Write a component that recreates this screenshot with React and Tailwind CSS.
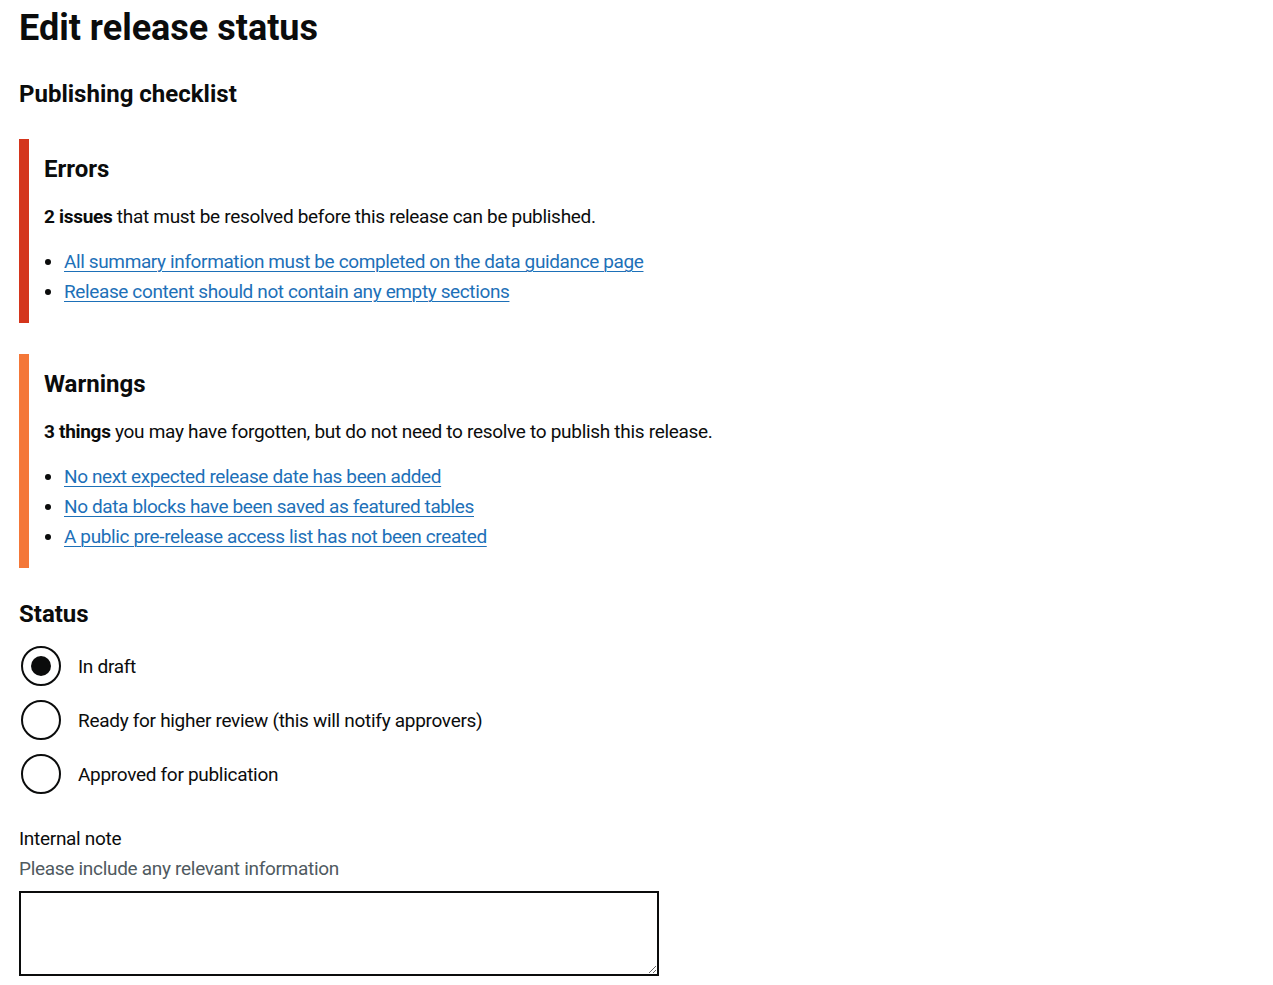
import { useState } from 'react';

// ── Data ───────────────────────────────────────────────────────────────────────

const ERRORS = [
  'All summary information must be completed on the data guidance page',
  'Release content should not contain any empty sections',
];

const WARNINGS = [
  'No next expected release date has been added',
  'No data blocks have been saved as featured tables',
  'A public pre-release access list has not been created',
];

const STATUSES = [
  { value: 'Draft', label: 'In draft' },
  { value: 'HigherLevelReview', label: 'Ready for higher review (this will notify approvers)' },
  { value: 'Approved', label: 'Approved for publication' },
];

// ── Sub-components ─────────────────────────────────────────────────────────────

function ChecklistPanel({ title, colour, summary, items, className = '' }) {
  return (
    <div className={`border-l-[10px] ${colour} pl-[15px] pt-[15px] pb-[16px] ${className}`}>
      <h3 className="text-[24px] leading-[30px] font-bold">{title}</h3>
      <p className="mt-[20px] text-[19px] leading-[25px] tracking-[-0.3px]">{summary}</p>
      <ul className="mt-[18px] list-disc pl-[20px]">
        {items.map(item => (
          <li key={item} className="text-[19px] leading-[30px] tracking-[-0.38px]">
            <a href="#" className="text-[#1d70b8] underline decoration-1 underline-offset-[3px]">{item}</a>
          </li>
        ))}
      </ul>
    </div>
  );
}

function Radio({ label, checked, onChange }) {
  return (
    <label className="flex items-center h-[44px] cursor-pointer">
      <span className="ml-[2px] w-[40px] h-[40px] rounded-full border-2 border-[#0b0c0c] flex items-center justify-center shrink-0">
        {checked && <span className="w-[20px] h-[20px] rounded-full bg-[#0b0c0c]" />}
      </span>
      <input type="radio" className="sr-only" checked={checked} onChange={onChange} />
      <span className="ml-[17px] text-[19px] leading-[25px] tracking-[-0.3px]">{label}</span>
    </label>
  );
}

// ── Main component ─────────────────────────────────────────────────────────────

export default function App() {
  const [status, setStatus] = useState('Draft');
  const [note, setNote] = useState('');

  return (
    <div className="min-h-screen bg-white px-[19px] pt-[8px] text-[#0b0c0c] font-['Roboto',sans-serif]">
      <h1 className="text-[36px] leading-[40px] font-bold">Edit release status</h1>

      <h2 className="mt-[31px] text-[24px] leading-[30px] font-bold">Publishing checklist</h2>

      <ChecklistPanel
        className="mt-[30px]"
        title="Errors"
        colour="border-[#d4351c]"
        summary={<><strong>2 issues</strong> that must be resolved before this release can be published.</>}
        items={ERRORS}
      />

      <ChecklistPanel
        className="mt-[31px]"
        title="Warnings"
        colour="border-[#f47738]"
        summary={<><strong>3 things</strong> you may have forgotten, but do not need to resolve to publish this release.</>}
        items={WARNINGS}
      />

      <h2 className="mt-[31px] text-[24px] leading-[30px] font-bold">Status</h2>

      <div className="mt-[15px] flex flex-col gap-[10px]">
        {STATUSES.map(s => (
          <Radio key={s.value} label={s.label} checked={status === s.value} onChange={() => setStatus(s.value)} />
        ))}
      </div>

      <label className="block mt-[30px] text-[19px] leading-[25px] tracking-[-0.3px]">Internal note</label>
      <div className="mt-[5px] text-[19px] leading-[25px] tracking-[-0.3px] text-[#505a5f]">Please include any relevant information</div>
      <textarea
        value={note}
        onChange={e => setNote(e.target.value)}
        className="block mt-[10px] w-[640px] h-[85px] border-2 border-[#0b0c0c] p-[5px] text-[19px] outline-none"
      />
    </div>
  );
}
